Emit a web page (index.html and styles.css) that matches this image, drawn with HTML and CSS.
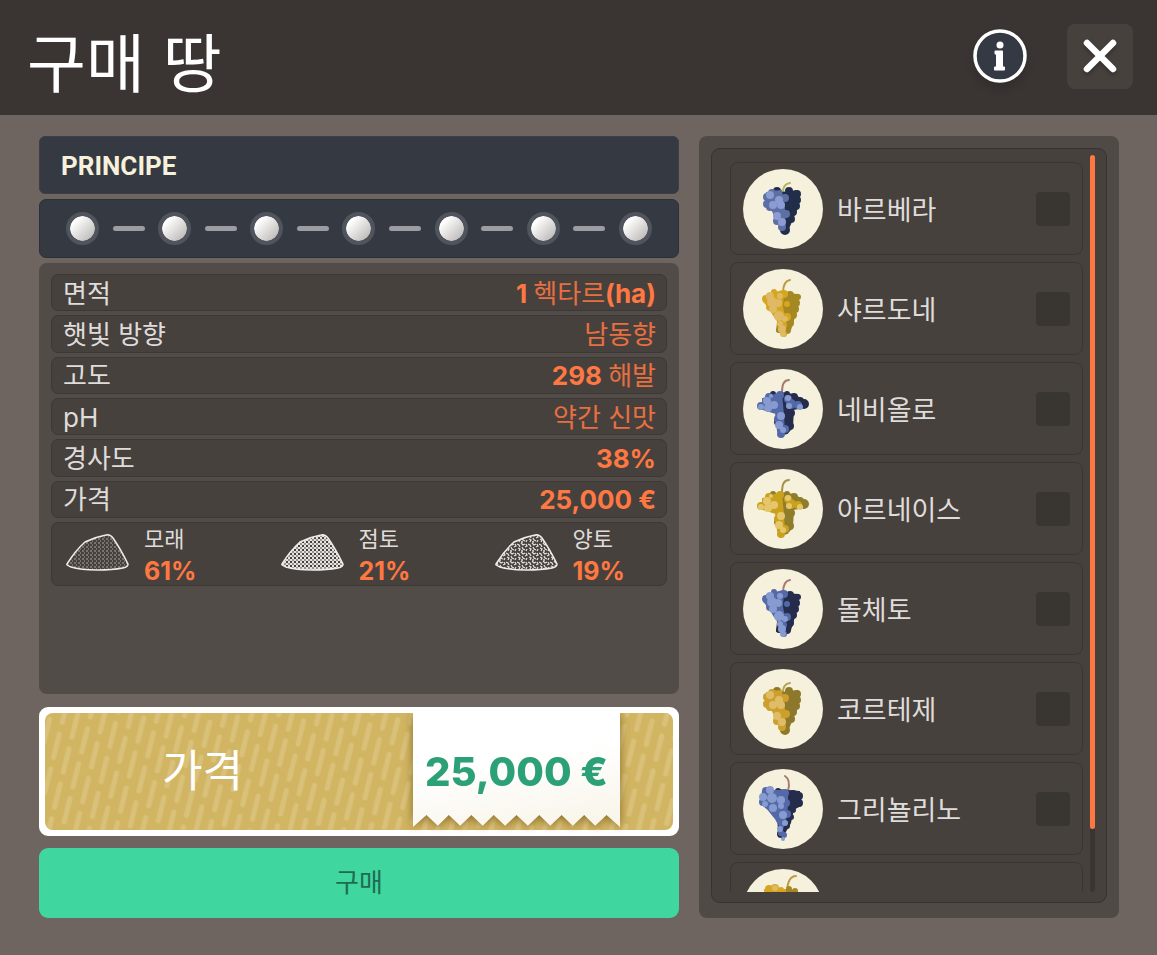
FILE: index.html
```
<!DOCTYPE html>
<html lang="ko">
<head>
  <meta charset="UTF-8">
  <meta name="viewport" content="width=device-width, initial-scale=1.0">
  <title>구매 땅</title>
  <link rel="stylesheet" href="styles.css">
</head>
<body>

<!-- shared grape and soil drawings -->
<svg class="defs" aria-hidden="true">
  <defs>
    <symbol id="grape-a" viewBox="0 0 80 80">
      <path class="stem" d="M40 23 Q40 15 47 14"/>
      <g class="dark"><path d="M38 24L54 22L55 36L49 50L44 62L38 60Z"/><circle cx="34" cy="22" r="3"/><circle cx="46" cy="22" r="3"/><circle cx="54" cy="25" r="3"/><circle cx="54" cy="31" r="3"/><circle cx="53" cy="37" r="3"/><circle cx="50" cy="43" r="3"/><circle cx="48" cy="50" r="3"/><circle cx="42" cy="61" r="4"/></g>
      <g class="mid"><path d="M24 24L38 22L42 46L40 58L36 55L30 42L23 35Z"/><circle cx="29" cy="24" r="3"/><circle cx="24" cy="28" r="3"/><circle cx="24" cy="35" r="3"/><circle cx="27" cy="38" r="3"/><circle cx="42" cy="29" r="3"/><circle cx="43" cy="45" r="3"/><circle cx="34" cy="52" r="3"/><circle cx="39" cy="58" r="3"/></g>
      <g class="light"><circle cx="27" cy="26" r="4"/><circle cx="30" cy="36" r="4"/><circle cx="36" cy="31" r="4"/><circle cx="38" cy="36" r="4"/><circle cx="34" cy="47" r="4"/><circle cx="39" cy="53" r="4"/></g>
    </symbol>
    <symbol id="grape-b" viewBox="0 0 80 80">
      <path class="stem" d="M40 24 Q40 12 47 11"/>
      <g class="dark"><path d="M38 25L55 26L54 38L47 61L40 64L34 62Z"/><circle cx="47" cy="26" r="3"/><circle cx="55" cy="28" r="2"/><circle cx="53" cy="34" r="3"/><circle cx="52" cy="40" r="3"/><circle cx="50" cy="46" r="3"/><circle cx="47" cy="54" r="3"/><circle cx="44" cy="61" r="3"/><circle cx="36" cy="61" r="2"/></g>
      <g class="mid"><path d="M24 26L40 22L39 38L42 52L38 56L32 48L26 38L21 32Z"/><circle cx="23" cy="30" r="3"/><circle cx="31" cy="23" r="2"/><circle cx="41" cy="25" r="3"/><circle cx="44" cy="35" r="2"/><circle cx="27" cy="38" r="3"/><circle cx="44" cy="48" r="3"/><circle cx="40" cy="56" r="3"/><circle cx="41" cy="65" r="2"/></g>
      <g class="light"><circle cx="27" cy="27" r="4"/><circle cx="29" cy="33" r="5"/><circle cx="37" cy="27" r="3"/><circle cx="35" cy="34" r="4"/><circle cx="30" cy="40" r="4"/><circle cx="36" cy="47" r="5"/><circle cx="42" cy="50" r="3"/><circle cx="37" cy="55" r="3"/><circle cx="39" cy="60" r="4"/><circle cx="40" cy="65" r="3"/></g>
    </symbol>
    <symbol id="grape-c" viewBox="0 0 80 80">
      <path class="stem" d="M39 23 Q39 11 46 11"/>
      <g class="dark"><path d="M38 24L50 26L62 32L62 38L50 40L49 58L44 64L36 66Z"/><circle cx="30" cy="25" r="2"/><circle cx="44" cy="25" r="2"/><circle cx="51" cy="28" r="3"/><circle cx="57" cy="32" r="3"/><circle cx="61" cy="35" r="4"/><circle cx="48" cy="44" r="3"/><circle cx="47" cy="57" r="3"/><circle cx="36" cy="53" r="4"/></g>
      <g class="mid"><path d="M20 30L38 24L40 46L41 64L35 62L33 44L20 40Z"/><circle cx="26" cy="28" r="3"/><circle cx="18" cy="37" r="3"/><circle cx="37" cy="26" r="3"/><circle cx="45" cy="30" r="3"/><circle cx="48" cy="35" r="4"/><circle cx="55" cy="36" r="3"/><circle cx="35" cy="50" r="3"/><circle cx="38" cy="65" r="3"/><circle cx="42" cy="60" r="3"/></g>
      <g class="light"><circle cx="28" cy="27" r="2"/><circle cx="24" cy="32" r="4"/><circle cx="18" cy="38" r="3"/><circle cx="25" cy="39" r="4"/><circle cx="31" cy="36" r="4"/><circle cx="45" cy="29" r="3"/><circle cx="46" cy="37" r="3"/><circle cx="57" cy="38" r="3"/><circle cx="38" cy="47" r="4"/><circle cx="36" cy="56" r="4"/><circle cx="40" cy="61" r="3"/></g>
    </symbol>
    <symbol id="grape-d" viewBox="0 0 80 80">
      <path class="stem" d="M45 22 Q48 11 42 7"/>
      <g class="dark"><path d="M34 21L56 23L58 36L50 40L47 54L40 66L36 64Z"/><circle cx="35" cy="22" r="2"/><circle cx="50" cy="25" r="3"/><circle cx="56" cy="27" r="3"/><circle cx="56" cy="34" r="3"/><circle cx="50" cy="41" r="2"/><circle cx="48" cy="48" r="2"/><circle cx="44" cy="57" r="2"/><circle cx="38" cy="65" r="3"/></g>
      <g class="mid"><path d="M20 22L44 22L44 36L42 52L39 60L33 50L25 40L18 34Z"/><circle cx="23" cy="22" r="3"/><circle cx="20" cy="33" r="3"/><circle cx="42" cy="24" r="3"/><circle cx="43" cy="34" r="3"/><circle cx="44" cy="45" r="3"/><circle cx="37" cy="50" r="3"/><circle cx="38" cy="64" r="2"/><circle cx="41" cy="66" r="2"/></g>
      <g class="light"><circle cx="27" cy="21" r="4"/><circle cx="20" cy="28" r="4"/><circle cx="29" cy="29" r="5"/><circle cx="22" cy="35" r="3"/><circle cx="30" cy="39" r="4"/><circle cx="38" cy="31" r="4"/><circle cx="38" cy="37" r="3"/><circle cx="40" cy="46" r="4"/><circle cx="42" cy="54" r="3"/><circle cx="37" cy="60" r="3"/><circle cx="40" cy="70" r="2"/></g>
    </symbol>
    <symbol id="grape-e" viewBox="0 0 80 80">
      <path class="stem" d="M44 22 Q45 7 53 7"/>
      <g class="dark"><path d="M36 21L54 22L54 38L40 66Z"/><circle cx="46" cy="20" r="2"/><circle cx="52" cy="22" r="2"/></g>
      <g class="mid"><path d="M22 21L42 21L42 50L38 62L24 38Z"/><circle cx="26" cy="20" r="3"/><circle cx="32" cy="19" r="3"/><circle cx="38" cy="21" r="2"/></g>
      <g class="light"><circle cx="32" cy="19" r="3"/><circle cx="27" cy="30" r="4"/></g>
    </symbol>

    <path id="pile" d="M1 30Q9 17 19 8Q29 3 40 1Q44 0 47 4Q54 14 62 30Q62 33 57 34Q46 36 32 36Q14 36 5 33Q0 31 1 30Z"/>
    <pattern id="sand" width="4" height="4" patternUnits="userSpaceOnUse">
      <path d="M0 1h2M2 3h1" stroke="#aaa6a2" stroke-width="1"/>
    </pattern>
    <pattern id="clay" width="4" height="4" patternUnits="userSpaceOnUse">
      <path d="M0 0L4 4M4 0L0 4M0 2h4" stroke="#e6e3e0" stroke-width="1"/>
    </pattern>
    <pattern id="loam" width="11" height="9" patternUnits="userSpaceOnUse">
      <path d="M0 1l2 1l1 2M4 0l2 2l2 -1M9 1l1 2l-2 1M1 5l2 1l-1 2M5 4l1 2l2 1M10 6l-1 2M4 8l2 0" fill="none" stroke="#e2dfdc" stroke-width="1.3"/>
    </pattern>
    <pattern id="dashes" width="39" height="36" patternUnits="userSpaceOnUse" patternTransform="rotate(14)">
      <path d="M6 5v24M19 17v24M19 -19v24M32 -7v24M32 29v24" stroke="#dac17a" stroke-width="5" stroke-linecap="round"/>
    </pattern>
  </defs>
</svg>

<header class="header">
  <h1 class="title">구매 땅</h1>
  <button class="info" type="button" aria-label="정보">
    <svg width="54" height="54" viewBox="0 0 54 54">
      <circle cx="27" cy="27" r="25" fill="#343943" stroke="#fff" stroke-width="3.5"/>
      <circle cx="27" cy="16" r="3.5" fill="#fff"/>
      <path d="M22.500 22.500h6.500v16h2v2h-9v-2h2v-14h-1.500z" fill="#fff" stroke="#fff" stroke-width="2" stroke-linejoin="round"/>
    </svg>
  </button>
  <button class="close" type="button" aria-label="닫기">
    <svg width="34" height="34" viewBox="0 0 34 34">
      <path d="M4 4L30 30M30 4L4 30" stroke="#fff" stroke-width="6.5" stroke-linecap="round"/>
    </svg>
  </button>
</header>

<main class="main">
  <section class="plot">
    <h2 class="name">PRINCIPE</h2>

    <div class="steps">
      <i class="dot"></i><i class="dash"></i>
      <i class="dot"></i><i class="dash"></i>
      <i class="dot"></i><i class="dash"></i>
      <i class="dot"></i><i class="dash"></i>
      <i class="dot"></i><i class="dash"></i>
      <i class="dot"></i><i class="dash"></i>
      <i class="dot"></i>
    </div>

    <div class="details">
      <dl class="specs">
        <div class="row"><dt>면적</dt><dd>1 <span class="ko">헥타르</span>(ha)</dd></div>
        <div class="row"><dt>햇빛 방향</dt><dd><span class="ko">남동향</span></dd></div>
        <div class="row"><dt>고도</dt><dd>298 <span class="ko">해발</span></dd></div>
        <div class="row"><dt>pH</dt><dd><span class="ko">약간 신맛</span></dd></div>
        <div class="row"><dt>경사도</dt><dd>38%</dd></div>
        <div class="row"><dt>가격</dt><dd>25,000 €</dd></div>
      </dl>
      <div class="soils">
        <div class="soil">
          <svg class="pile" viewBox="0 0 63 37"><use href="#pile" fill="url(#sand)"/></svg>
          <p class="soil-text">모래 <b>61%</b></p>
        </div>
        <div class="soil">
          <svg class="pile" viewBox="0 0 63 37"><use href="#pile" fill="url(#clay)"/></svg>
          <p class="soil-text">점토 <b>21%</b></p>
        </div>
        <div class="soil">
          <svg class="pile" viewBox="0 0 63 37"><use href="#pile" fill="url(#loam)"/></svg>
          <p class="soil-text">양토 <b>19%</b></p>
        </div>
      </div>
    </div>

    <div class="price">
      <svg class="price-bg" width="100%" height="100%" aria-hidden="true"><rect width="100%" height="100%" fill="url(#dashes)"/></svg>
      <span class="price-label">가격</span>
      <div class="ticket"><span class="paper">25,000 €</span></div>
    </div>

    <button class="buy" type="button">구매</button>
  </section>

  <section class="grapes">
    <div class="frame">
      <div class="list">
        <label class="grape"><svg class="pic blue-a"><use href="#grape-a"/></svg><span>바르베라</span><input type="checkbox"></label>
        <label class="grape"><svg class="pic gold-a"><use href="#grape-b"/></svg><span>샤르도네</span><input type="checkbox"></label>
        <label class="grape"><svg class="pic blue-b"><use href="#grape-c"/></svg><span>네비올로</span><input type="checkbox"></label>
        <label class="grape"><svg class="pic gold-b"><use href="#grape-c"/></svg><span>아르네이스</span><input type="checkbox"></label>
        <label class="grape"><svg class="pic blue-b"><use href="#grape-b"/></svg><span>돌체토</span><input type="checkbox"></label>
        <label class="grape"><svg class="pic gold-c"><use href="#grape-a"/></svg><span>코르테제</span><input type="checkbox"></label>
        <label class="grape"><svg class="pic blue-b"><use href="#grape-d"/></svg><span>그리뇰리노</span><input type="checkbox"></label>
        <label class="grape"><svg class="pic gold-a"><use href="#grape-e"/></svg><span></span><input type="checkbox" aria-label="포도"></label>
      </div>
      <div class="track"><div class="thumb"></div></div>
    </div>
  </section>
</main>

</body>
</html>
```

FILE: styles.css
```
* {
  box-sizing: border-box;
}
body {
  margin: 0;
  height: 100vh;
  display: flex;
  flex-direction: column;
  background: #6e6560;
  color: #dfdcda;
  font-family: Inter, "Noto Sans CJK KR", sans-serif;
  font-size: 26px;
}
h1, h2, p, dl, dd {
  margin: 0;
}
button {
  font-family: inherit;
  border: none;
  padding: 0;
  cursor: pointer;
}
.defs {
  position: absolute;
  width: 0;
  height: 0;
}

/* header */
.header {
  display: flex;
  align-items: center;
  height: 115px;
  flex: none;
  padding: 0 24px 3px 27px;
  background: #3a3532;
}
.title {
  flex: 1;
  padding-top: 16px;
  color: #fff;
  font-size: 64px;
  font-weight: 400;
  line-height: 96px;
}
.info {
  display: flex;
  margin-right: 40px;
  border-radius: 50%;
  background: none;
  box-shadow: 0 6px 8px rgba(0, 0, 0, 0.15);
}
.close {
  display: flex;
  align-items: center;
  justify-content: center;
  width: 66px;
  height: 65px;
  border-radius: 8px;
  background: #47413e;
}
.close svg {
  filter: drop-shadow(0 3px 2px rgba(0, 0, 0, 0.25));
}

.main {
  flex: 1;
  min-height: 0;
  display: grid;
  grid-template-columns: 640fr 420fr;
  gap: 20px;
  padding: 21px 38px 37px 39px;
}

/* left column */
.plot {
  display: flex;
  flex-direction: column;
  min-height: 0;
}
.name {
  height: 58px;
  padding: 0 21px;
  border: 1px solid #3e3f45;
  border-radius: 6px;
  background: #353942;
  color: #f7f1dc;
  font-family: Roboto, sans-serif;
  font-size: 26px;
  font-weight: 700;
  line-height: 58px;
}
.steps {
  display: flex;
  align-items: center;
  justify-content: space-between;
  height: 59px;
  margin: 5px 0;
  padding: 0 26px;
  border: 1px solid #2c3038;
  border-radius: 7px;
  background: #353942;
}
.dot {
  width: 33px;
  height: 33px;
  border: 4px solid #50545d;
  border-radius: 50%;
  background: linear-gradient(135deg, #fff 20%, #bcbab7 90%) padding-box;
}
.dash {
  width: 32px;
  height: 5px;
  border-radius: 3px;
  background: #9c9ca2;
}
.details {
  flex: 1;
  padding: 11px 12px;
  border-radius: 8px;
  background: #524c48;
}
.specs {
  display: grid;
  grid-auto-rows: 1fr;
  gap: 4px;
  height: 244px;
}
.row {
  display: flex;
  align-items: center;
  justify-content: space-between;
  padding: 2px 10px 0 11px;
  border: 1px solid #3d3835;
  border-radius: 7px;
  background: #47413e;
  line-height: 30px;
}
.row dd {
  color: #ff7842;
  font-weight: 700;
}
.row .ko {
  color: #e76f40;
  font-weight: 400;
}
.soils {
  display: flex;
  justify-content: space-between;
  height: 64px;
  margin-top: 4px;
  padding: 0 41px 0 14px;
  border: 1px solid #3d3835;
  border-radius: 7px;
  background: #47413e;
}
.soil {
  display: flex;
  gap: 15px;
}
.pile {
  width: 63px;
  height: 37px;
  margin-top: 11px;
  stroke: #efedea;
  stroke-width: 1.5;
}
.soil-text {
  font-size: 22px;
  line-height: 32px;
}
.soil-text b {
  display: block;
  color: #ff7842;
  font-size: 25px;
}

/* price and buy */
.price {
  position: relative;
  display: flex;
  align-items: center;
  height: 129px;
  margin: 13px 0 12px;
  border: 6px solid #fff;
  border-radius: 9px;
  background: #fff;
}
.price-bg {
  position: absolute;
  inset: 0;
  border-radius: 8px;
  background: #d1b563;
}
.price-label {
  position: relative;
  flex: 1;
  padding-bottom: 8px;
  color: #fff;
  font-size: 44px;
  text-align: center;
}
.ticket {
  position: relative;
  align-self: stretch;
  margin: 0 53px;
  filter: drop-shadow(0 1px 5px rgba(90, 60, 0, 0.6));
  clip-path: inset(0 -20px -4px -20px);
}
.paper {
  display: block;
  width: 207px;
  height: 114px;
  background: linear-gradient(170deg, #fff 40%, #f8f4e8);
  clip-path: polygon(0 0, 100% 0, 100% 100%, 93.5% 89.5%, 88% 99%, 82.7% 89.5%, 77.2% 99%, 71.8% 89.5%, 66.3% 99%, 61% 89.5%, 55.5% 99%, 50% 89.5%, 44.5% 99%, 39% 89.5%, 33.7% 99%, 28.2% 89.5%, 22.8% 99%, 17.3% 89.5%, 12% 99%, 6.5% 89.5%, 0 100%);
  color: #2ca177;
  font-size: 40px;
  font-weight: 800;
  line-height: 118px;
  text-align: center;
  white-space: nowrap;
}
.buy {
  flex: none;
  height: 70px;
  padding-bottom: 5px;
  border-radius: 9px;
  background: #3fd69f;
  color: #1f6b50;
  font-size: 26px;
}

/* grape list */
.grapes {
  min-height: 0;
  padding: 12px 12px 15px;
  border-radius: 8px;
  background: #504a46;
}
.frame {
  display: flex;
  gap: 7px;
  height: 100%;
  padding: 6px 11px 10px 18px;
  border: 1px solid #383330;
  border-radius: 9px;
  background: #47413e;
}
.list {
  flex: 1;
  display: flex;
  flex-direction: column;
  gap: 7px;
  padding-top: 7px;
  overflow: hidden;
}
.grape {
  flex: none;
  display: flex;
  align-items: center;
  gap: 14px;
  height: 93px;
  padding: 0 12px;
  border: 1px solid #3b3633;
  border-radius: 8px;
  font-size: 27px;
}
.grape span {
  flex: 1;
}
.grape input {
  appearance: none;
  width: 34px;
  height: 34px;
  margin: 0;
  border-radius: 4px;
  background: #393632;
}
.pic {
  width: 80px;
  height: 80px;
  border-radius: 50%;
  background: #f6f1dc;
}
.stem {
  fill: none;
  stroke: var(--stem);
  stroke-width: 2;
  stroke-linecap: round;
}
.dark {
  fill: var(--dark);
  stroke: var(--dark);
  stroke-width: 2;
}
.mid {
  fill: var(--mid);
  stroke: var(--mid);
  stroke-width: 2;
}
.light {
  fill: var(--light);
}
.blue-a {
  --stem: #b5b763;
  --dark: #222e49;
  --mid: #5d70a5;
  --light: #8c9bd3;
}
.blue-b {
  --stem: #a67c70;
  --dark: #252c4c;
  --mid: #5469a8;
  --light: #879bd1;
}
.gold-a {
  --stem: #bd9b40;
  --dark: #a58822;
  --mid: #d5a720;
  --light: #dfb963;
}
.gold-b {
  --stem: #a5934e;
  --dark: #8f7d2c;
  --mid: #c9a11c;
  --light: #e6c66d;
}
.gold-c {
  --stem: #b5a651;
  --dark: #8d782c;
  --mid: #cd9f2c;
  --light: #dfbd68;
}
.track {
  width: 5px;
  border-radius: 3px;
  background: #3a3532;
}
.thumb {
  height: 91.5%;
  border-radius: 3px;
  background: #ff7842;
}
```
